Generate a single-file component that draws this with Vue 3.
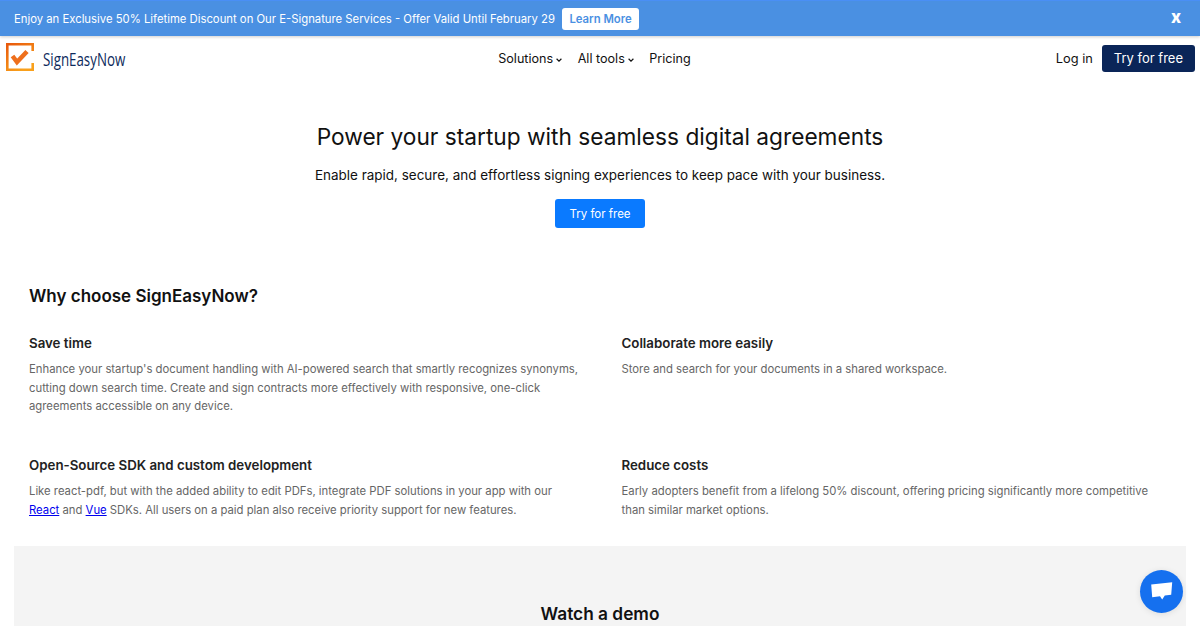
<template>
  <div class="page">
    <div class="promo">
      <div class="promo__left">
        <span>Enjoy an Exclusive 50% Lifetime Discount on Our E-Signature Services - Offer Valid Until February 29</span>
        <a class="promo__btn">Learn More</a>
      </div>
      <span class="promo__close">x</span>
    </div>

    <header class="nav">
      <div class="logo">
        <svg width="30" height="30" viewBox="0 0 30 30" fill="none" xmlns="http://www.w3.org/2000/svg">
          <defs>
            <linearGradient id="logoFrame" x1="0" y1="0" x2="0.6" y2="1">
              <stop offset="0" stop-color="#e8590c" />
              <stop offset="1" stop-color="#f9a01b" />
            </linearGradient>
          </defs>
          <path d="M27.7 8V1.300H2.300V26.700H27.700V20" stroke="url(#logoFrame)" stroke-width="2.600" />
          <path d="M7.500 13L12 19L22 8.500" stroke="#ee6f1c" stroke-width="4.500" />
        </svg>
        <span class="logo__text">SignEasyNow</span>
      </div>
      <nav class="nav__links">
        <a>Solutions<svg class="chev" width="6" height="4" viewBox="0 0 6 4" fill="none"><path d="M.6.8 3 3.1 5.4.8" stroke="#111" stroke-width="1.200" /></svg></a>
        <a>All tools<svg class="chev" width="6" height="4" viewBox="0 0 6 4" fill="none"><path d="M.6.8 3 3.1 5.4.8" stroke="#111" stroke-width="1.200" /></svg></a>
        <a>Pricing</a>
      </nav>
      <div class="nav__right">
        <a>Log in</a>
        <a class="nav__try">Try for free</a>
      </div>
    </header>

    <section class="hero">
      <h1>Power your startup with seamless digital agreements</h1>
      <p>Enable rapid, secure, and effortless signing experiences to keep pace with your business.</p>
      <a class="hero__btn">Try for free</a>
    </section>

    <section class="why">
      <h2>Why choose SignEasyNow?</h2>
      <div class="why__grid">
        <div class="feature">
          <h3>Save time</h3>
          <p>Enhance your startup's document handling with AI-powered search that smartly recognizes synonyms, cutting down search time. Create and sign contracts more effectively with responsive, one-click agreements accessible on any device.</p>
        </div>
        <div class="feature">
          <h3>Collaborate more easily</h3>
          <p>Store and search for your documents in a shared workspace.</p>
        </div>
        <div class="feature">
          <h3>Open-Source SDK and custom development</h3>
          <p>Like react-pdf, but with the added ability to edit PDFs, integrate PDF solutions in your app with our <a href="#">React</a> and <a href="#">Vue</a> SDKs. All users on a paid plan also receive priority support for new features.</p>
        </div>
        <div class="feature">
          <h3>Reduce costs</h3>
          <p>Early adopters benefit from a lifelong 50% discount, offering pricing significantly more competitive than similar market options.</p>
        </div>
      </div>
    </section>

    <section class="demo">
      <h2>Watch a demo</h2>
    </section>

    <button class="chat" type="button" aria-label="chat">
      <svg width="24" height="20" viewBox="0 0 24 20" xmlns="http://www.w3.org/2000/svg">
        <path d="M1.200 2.500 22.200.2 21.200 12.800 14.800 13.400 12.200 17.500 10 14.200 2.200 15.200Z" fill="#fff" />
      </svg>
    </button>
  </div>
</template>

<script setup>
</script>

<style>
html,
body {
  margin: 0;
  overflow: hidden;
}
</style>

<style scoped>
.page {
  height: 626px;
  overflow: hidden;
  position: relative;
  background: #fff;
  font-family: Inter, "Noto Sans", sans-serif;
  color: #111;
}

.promo {
  height: 36px;
  box-sizing: border-box;
  border-top: 1px solid #4a8ff5;
  display: flex;
  align-items: center;
  justify-content: space-between;
  padding: 0 19px 0 14px;
  background: #4a90e2;
  color: #fff;
  font-size: 11.300px;
  box-shadow: 0 1px 3px rgba(0, 0, 0, 0.2);
  position: relative;
}

.promo__left {
  display: flex;
  align-items: center;
  gap: 7px;
}

.promo__btn {
  background: #fff;
  color: #4a90e2;
  font-weight: 600;
  font-size: 11.300px;
  padding: 0 7.500px;
  height: 22px;
  line-height: 22px;
  border-radius: 3px;
}

.promo__close {
  font-weight: 800;
  font-size: 17px;
  line-height: 20px;
  margin-bottom: 3px;
}

.nav {
  display: grid;
  grid-template-columns: 1fr auto 1fr;
  align-items: center;
  height: 44px;
  padding: 0 5px;
}

.logo {
  display: flex;
  align-items: center;
  gap: 8px;
}

.logo__text {
  font-family: "Open Sans", sans-serif;
  font-size: 18.500px;
  color: #0d2a5c;
  transform: scaleX(0.72);
  transform-origin: left center;
}

.nav__links {
  display: flex;
  gap: 15.500px;
  margin-right: 11px;
  font-size: 12.600px;
}

.chev {
  margin-left: 3px;
  vertical-align: 1px;
}

.nav__right {
  display: flex;
  align-items: center;
  justify-content: flex-end;
  gap: 9px;
  font-size: 12.800px;
}

.nav__try {
  background: #0a2558;
  color: #fff;
  font-size: 13px;
  height: 27px;
  line-height: 27px;
  padding: 0 12px;
  border-radius: 3px;
}

.hero {
  display: flex;
  flex-direction: column;
  align-items: center;
  padding-top: 42px;
}

.hero h1 {
  margin: 0;
  font-size: 22.700px;
  font-weight: 400;
  line-height: 30px;
}

.hero p {
  margin: 13px 0 0;
  font-size: 13.470px;
  line-height: 20px;
}

.hero__btn {
  margin-top: 14px;
  background: #0a7aff;
  color: #fff;
  font-size: 11.500px;
  height: 29px;
  line-height: 30px;
  padding: 0 14px;
  border-radius: 3px;
}

.why {
  padding: 56px 29px 0;
}

.why h2 {
  margin: 0;
  font-size: 17px;
  font-weight: 600;
  line-height: 24px;
}

.why__grid {
  display: grid;
  grid-template-columns: 1fr 1fr;
  column-gap: 43px;
  margin-top: 26px;
}

.feature {
  min-height: 122px;
}

.feature:nth-child(n + 3) {
  min-height: 0;
}

.feature h3 {
  margin: 0;
  font-size: 13.300px;
  font-weight: 600;
  line-height: 18px;
  color: #222;
}

.feature p {
  margin: 8px 0 0;
  font-size: 11.300px;
  line-height: 18.500px;
  color: #666;
}

.feature a {
  color: #00e;
}

.demo {
  margin: 27px 14px 0;
  background: #f4f4f4;
  height: 120px;
  padding-top: 57px;
  box-sizing: border-box;
  text-align: center;
}

.demo h2 {
  margin: 0;
  font-size: 17.300px;
  font-weight: 600;
  line-height: 22px;
}

.chat {
  position: absolute;
  right: 17px;
  bottom: 13px;
  width: 43px;
  height: 43px;
  border: 0;
  border-radius: 50%;
  background: #1570ef;
  display: flex;
  align-items: center;
  justify-content: center;
  padding: 0;
  box-shadow: 0 1px 6px rgba(0, 0, 0, 0.1);
}
</style>
